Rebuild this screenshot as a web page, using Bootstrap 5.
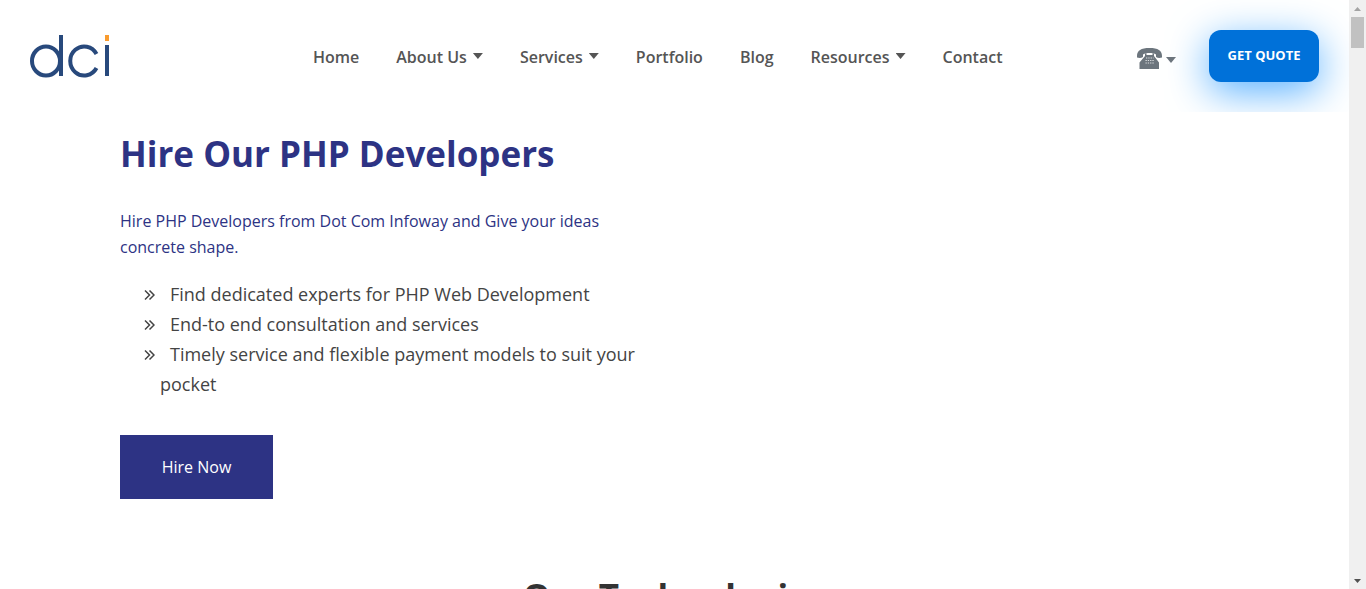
<!DOCTYPE html>
<html lang="en">
<head>
<meta charset="utf-8">
<meta name="viewport" content="width=device-width, initial-scale=1">
<title>Hire Our PHP Developers</title>
<link href="https://cdn.jsdelivr.net/npm/bootstrap@5.3.0/dist/css/bootstrap.min.css" rel="stylesheet">
<style>
body { font-family: "Open Sans", sans-serif; color: #444; }
.site-header { height: 112px; padding: 0 30px; }
.main-nav { gap: 37px; margin-left: 203px; padding-top: 2px; }
.main-nav .nav-link { padding: 0; font-size: 16px; font-weight: 600; line-height: 24px; color: #555; white-space: nowrap; }
.caret { width: 10px; height: 6px; margin-left: 6px; background: currentColor; clip-path: polygon(0 0, 100% 0, 50% 100%); }
.main-nav .caret { margin-bottom: 2px; }
.phone-toggle { color: #6c757d; margin-right: 33px; padding-top: 4px; }
.phone-toggle .caret { margin: 4px 0 0 4px; }
.btn-quote { width: 110px; height: 52px; border-radius: 12px; background: #0071d9; color: #fff; font-size: 13px; font-weight: 700; padding: 0; box-shadow: 0 10px 40px #58b0ff; }
.btn-quote:hover { background: #0062bd; color: #fff; }
.hero { padding: 0 120px; }
.hero-text { max-width: 520px; }
.hero h1 { font-size: 35px; line-height: 44px; font-weight: 700; color: #2d3384; margin: 20px 0 32px; }
.hero p { font-size: 16px; line-height: 26px; color: #2d3384; margin-bottom: 19px; }
.hero ul { padding-left: 40px; margin-bottom: 36px; font-size: 18px; line-height: 30px; }
.hero li { text-indent: -16px; }
.hero li svg { width: 11px; height: 11px; margin-right: 15px; vertical-align: 0; }
.btn-hire { width: 153px; height: 64px; border-radius: 0; background: #2d3384; color: #fff; font-size: 16px; }
.btn-hire:hover { background: #232969; color: #fff; }
.tech h2 { font-size: 35px; line-height: 44px; font-weight: 700; color: #333; margin: 76px 0 0; }
.scroll-strip { width: 17px; background: #f0f0f0; }
.scroll-thumb { width: 13px; height: 31px; background: #c1c1c1; }
.strip-end { height: 17px; }
</style>
</head>
<body>
<div class="d-flex vh-100 overflow-hidden">
  <div class="flex-grow-1 overflow-hidden">
    <header class="site-header d-flex align-items-center overflow-hidden">
      <a href="#" aria-label="dci home" class="d-block lh-1">
        <svg width="80" height="44" viewBox="0 0 80 44" fill="none" stroke="#28497c" stroke-width="4">
          <ellipse cx="16" cy="27" rx="14" ry="14.500"/><path d="M31 1v41M66.500 20a14 14.500 0 1 0 0 14M77 11v31"/><path d="M77 1v6" stroke="#f99b2e"/>
        </svg>
      </a>
      <nav class="nav main-nav flex-nowrap" aria-label="Main">
        <a class="nav-link" href="#">Home</a>
        <a class="nav-link d-flex align-items-center" href="#">About Us<span class="caret"></span></a>
        <a class="nav-link d-flex align-items-center" href="#">Services<span class="caret"></span></a>
        <a class="nav-link" href="#">Portfolio</a>
        <a class="nav-link" href="#">Blog</a>
        <a class="nav-link d-flex align-items-center" href="#">Resources<span class="caret"></span></a>
        <a class="nav-link" href="#">Contact</a>
      </nav>
      <a class="phone-toggle d-flex align-items-center ms-auto" href="#" aria-label="Phone numbers">
        <svg width="25" height="21" viewBox="0 0 25 21" fill="currentColor">
          <path d="M0 8C0 2.500 4 0 12.500 0S25 2.500 25 8v1.500q-3.500 1-6-.5V6.500c-3-2-10-2-13 0V9q-2.500 1.500-6 .5z"/>
          <path d="M8 5.500h1.500V7h6V5.500H17V8l5 6.500V21H2.500v-6.500L8 8z"/>
          <path d="M9 10h7.500M8.500 12.500h8.500M8.500 15h8.500" stroke="#fff" stroke-opacity=".75" stroke-width="1.200" stroke-dasharray="1.300 1"/>
        </svg>
        <span class="caret"></span>
      </a>
      <button type="button" class="btn btn-quote">GET QUOTE</button>
    </header>
    <main>
      <section class="hero">
        <div class="hero-text">
          <h1 class="text-nowrap">Hire Our PHP Developers</h1>
          <p>Hire PHP Developers from Dot Com Infoway and Give your ideas concrete shape.</p>
          <ul class="list-unstyled">
            <li><svg viewBox="0 0 11 11" fill="none" stroke="currentColor" stroke-width="1.500" aria-hidden="true"><path d="M1 .5 5.500 5 1 9.500M5.500.5 10 5 5.500 9.500"/></svg>Find dedicated experts for PHP Web Development</li>
            <li><svg viewBox="0 0 11 11" fill="none" stroke="currentColor" stroke-width="1.500" aria-hidden="true"><path d="M1 .5 5.500 5 1 9.500M5.500.5 10 5 5.500 9.500"/></svg>End-to end consultation and services</li>
            <li><svg viewBox="0 0 11 11" fill="none" stroke="currentColor" stroke-width="1.500" aria-hidden="true"><path d="M1 .5 5.500 5 1 9.500M5.500.5 10 5 5.500 9.500"/></svg>Timely service and flexible payment models to suit your pocket</li>
          </ul>
          <button type="button" class="btn btn-hire">Hire Now</button>
        </div>
      </section>
      <section class="tech text-center">
        <h2>Our Technologies</h2>
      </section>
    </main>
  </div>
  <div class="scroll-strip d-flex flex-column align-items-center flex-shrink-0" aria-hidden="true">
    <div class="strip-end d-flex align-items-center"><svg width="7" height="4" fill="#a3a3a3"><path d="M0 4 3.500 0 7 4z"/></svg></div>
    <div class="scroll-thumb"></div>
    <div class="strip-end d-flex align-items-center mt-auto"><svg width="7" height="4" fill="#505050"><path d="M0 0h7L3.500 4z"/></svg></div>
  </div>
</div>
<script src="https://cdn.jsdelivr.net/npm/bootstrap@5.3.0/dist/js/bootstrap.bundle.min.js"></script>
</body>
</html>
